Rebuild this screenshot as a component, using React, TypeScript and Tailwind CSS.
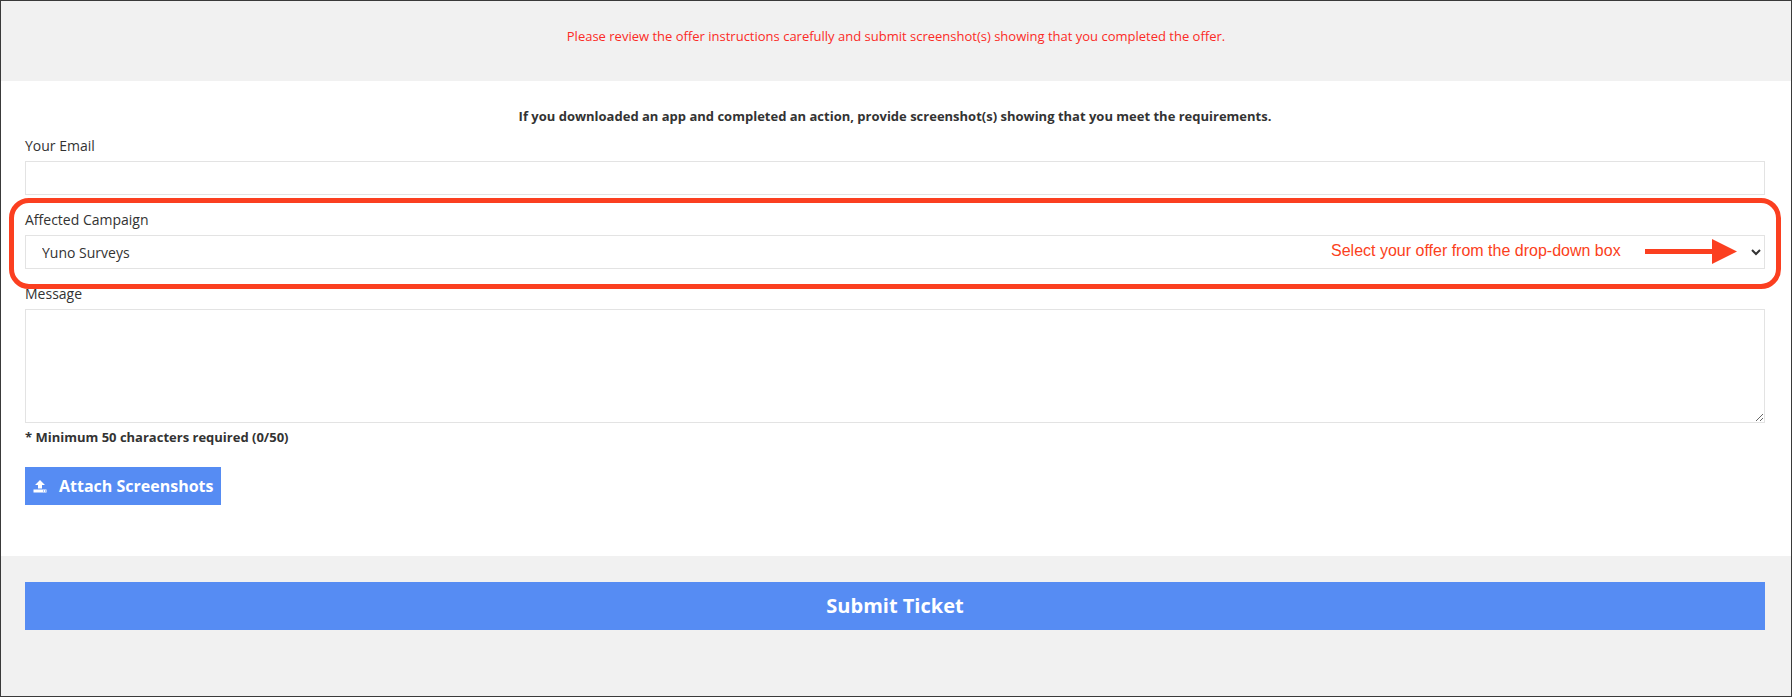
import { useState } from 'react'

const fieldClass = 'block w-full border border-[#e3e3e3] bg-white text-[14px] text-[#333] outline-none'

export default function App() {
    const [campaign, setCampaign] = useState('Yuno Surveys')

    return (
        <div className="relative h-[697px] w-[1792px] overflow-hidden border border-[#3a3a3a] bg-white font-['Open_Sans',sans-serif] text-[#333]">
            <div className="flex h-[80px] items-center justify-center bg-[#f1f1f1] pb-[9px] text-[13px] text-[#fb2b26]">
                Please review the offer instructions carefully and submit screenshot(s) showing that you completed the offer.
            </div>

            <form className="h-[475px] pt-[25px] pr-[26px] pl-[24px]" onSubmit={(e) => e.preventDefault()}>
                <p className="text-center text-[13px] leading-[20px] font-bold">
                    If you downloaded an app and completed an action, provide screenshot(s) showing that you meet the requirements.
                </p>

                <label className="mt-[10px] block text-[14px] leading-[20px]">Your Email</label>
                <input type="email" className={`${fieldClass} mt-[5px] h-[34px]`} />

                <label className="mt-[15px] block text-[14px] leading-[20px]">Affected Campaign</label>
                <select
                    value={campaign}
                    onChange={(e) => setCampaign(e.target.value)}
                    className={`${fieldClass} mt-[5px] h-[34px] pl-[12px]`}
                >
                    <option>Yuno Surveys</option>
                </select>

                <label className="mt-[15px] block text-[14px] leading-[20px]">Message</label>
                <textarea className={`${fieldClass} mt-[5px] h-[114px]`} />

                <p className="mt-[4px] text-[13px] leading-[20px] font-bold">* Minimum 50 characters required (0/50)</p>

                <button type="button" className="mt-[20px] flex h-[38px] w-[196px] items-center bg-[#568cf3] pl-[8px] text-[16px] font-bold text-white">
                    <svg width="14" height="14" viewBox="0 0 14 14" fill="currentColor" className="mr-[12px]">
                        <path d="M7 1 L12 6 H9 V9.5 H5 V6 H2 Z" />
                        <path fillRule="evenodd" d="M0.5 10.5 H13.5 V13.5 H0.5 Z M10 11.5 V12.5 H11 V11.5 Z M12 11.5 V12.5 H13 V11.5 Z" />
                    </svg>
                    Attach Screenshots
                </button>
            </form>

            <div className="h-[140px] bg-[#f1f1f1] pt-[26px] pr-[26px] pl-[24px]">
                <button type="button" className="h-[48px] w-full bg-[#568cf3] text-[20px] font-bold text-white">
                    Submit Ticket
                </button>
            </div>

            {/* annotation drawn on top of the screenshot */}
            <div className="pointer-events-none absolute top-[197px] left-[8px] h-[91px] w-[1772px] rounded-[20px] border-[5px] border-[#fb3f20]" />
            <span className="pointer-events-none absolute top-[240px] left-[1330px] font-['Liberation_Sans',sans-serif] text-[16px] leading-[20px] whitespace-nowrap text-[#fb3f20]">
                Select your offer from the drop-down box
            </span>
            <svg className="pointer-events-none absolute top-[238px] left-[1644px]" width="92" height="25" viewBox="0 0 92 25" fill="#fb3f20">
                <rect x="0" y="10" width="68" height="5" />
                <path d="M67 0 L92 12.5 L67 25 Z" />
            </svg>
        </div>
    )
}
